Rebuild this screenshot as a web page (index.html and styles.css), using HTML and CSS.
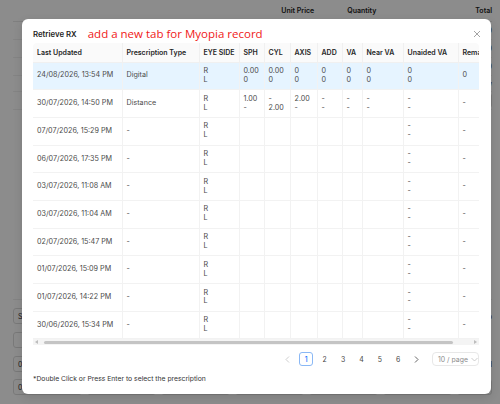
FILE: index.html
```html
<!DOCTYPE html>
<html lang="en">
<head>
    <meta charset="UTF-8">
    <meta name="viewport" content="width=device-width, initial-scale=1.0">
    <title>Retrieve RX</title>
    <link rel="stylesheet" href="styles.css">
</head>
<body>
    <!-- Order page behind the dialog -->
    <div class="page">
        <div class="items-head">
            <span class="col-name"></span>
            <span class="col-price">Unit Price</span>
            <span class="col-qty">Quantity</span>
            <span class="col-total">Total</span>
        </div>
        <div class="items-row"><span class="col-total">0</span></div>
        <div class="items-row"><span class="col-total">0</span></div>
        <div class="items-row"><span class="col-total">0</span></div>
        <div class="items-row note"><span class="col-total">New</span></div>
        <div class="items-row"><span class="chip">Dis</span></div>
        <div class="spacer"></div>
        <div class="field-line"><span class="field small">S</span><span class="side-text">Distrib</span></div>
        <div class="field-line"><span class="field small"></span></div>
        <div class="field-line"><span class="field small">0</span><span class="side-text">Saved</span></div>
        <div class="field-grid">
            <span class="field">0.00</span>
            <span class="field">0.00</span>
            <span class="field">0.00</span>
            <span class="field">0.00</span>
            <span class="field">0.00</span>
            <span class="field">0.00</span>
            <span class="field">0.00</span>
        </div>
    </div>

    <div class="mask"></div>

    <div class="modal">
        <div class="modal-head">
            <span class="modal-title">Retrieve RX</span>
            <span class="todo-note">add a new tab for Myopia record</span>
            <button class="close-btn" type="button" aria-label="Close">
                <svg width="8" height="8" viewBox="0 0 8 8"><path d="M1 1L7 7M7 1L1 7" stroke="#9a9a9a" stroke-width="0.9" fill="none"/></svg>
            </button>
        </div>

        <div class="rx-scroll">
            <table class="rx-table">
                <colgroup>
                    <col style="width:89px"><col style="width:77px"><col style="width:40px">
                    <col style="width:25px"><col style="width:26px"><col style="width:27px">
                    <col style="width:25px"><col style="width:20px"><col style="width:41px">
                    <col style="width:55px"><col style="width:71px">
                </colgroup>
                <thead>
                    <tr>
                        <th>Last Updated</th><th>Prescription Type</th><th>EYE SIDE</th>
                        <th>SPH</th><th>CYL</th><th>AXIS</th><th>ADD</th><th>VA</th>
                        <th>Near VA</th><th>Unaided VA</th><th>Remarks</th>
                    </tr>
                </thead>
                <tbody id="rxBody">
                    <tr class="selected">
                        <td>24/08/2026, 13:54 PM</td><td>Digital</td><td>R<br>L</td>
                        <td>0.00<br>0</td><td>0.00<br>0</td><td>0<br>0</td><td>0<br>0</td>
                        <td>0<br>0</td><td>0<br>0</td><td>0<br>0</td><td>0</td>
                    </tr>
                    <tr>
                        <td>30/07/2026, 14:50 PM</td><td>Distance</td><td>R<br>L</td>
                        <td>1.00<br>-</td><td>-<br>2.00</td><td>2.00<br>-</td><td>-<br>-</td>
                        <td>-<br>-</td><td>-<br>-</td><td>-<br>-</td><td>-</td>
                    </tr>
                    <tr><td>07/07/2026, 15:29 PM</td><td>-</td><td>R<br>L</td><td></td><td></td><td></td><td></td><td></td><td></td><td>-<br>-</td><td>-</td></tr>
                    <tr><td>06/07/2026, 17:35 PM</td><td>-</td><td>R<br>L</td><td></td><td></td><td></td><td></td><td></td><td></td><td>-<br>-</td><td>-</td></tr>
                    <tr><td>03/07/2026, 11:08 AM</td><td>-</td><td>R<br>L</td><td></td><td></td><td></td><td></td><td></td><td></td><td>-<br>-</td><td>-</td></tr>
                    <tr><td>03/07/2026, 11:04 AM</td><td>-</td><td>R<br>L</td><td></td><td></td><td></td><td></td><td></td><td></td><td>-<br>-</td><td>-</td></tr>
                    <tr><td>02/07/2026, 15:47 PM</td><td>-</td><td>R<br>L</td><td></td><td></td><td></td><td></td><td></td><td></td><td>-<br>-</td><td>-</td></tr>
                    <tr><td>01/07/2026, 15:09 PM</td><td>-</td><td>R<br>L</td><td></td><td></td><td></td><td></td><td></td><td></td><td>-<br>-</td><td>-</td></tr>
                    <tr><td>01/07/2026, 14:22 PM</td><td>-</td><td>R<br>L</td><td></td><td></td><td></td><td></td><td></td><td></td><td>-<br>-</td><td>-</td></tr>
                    <tr><td>30/06/2026, 15:34 PM</td><td>-</td><td>R<br>L</td><td></td><td></td><td></td><td></td><td></td><td></td><td>-<br>-</td><td>-</td></tr>
                </tbody>
            </table>
        </div>
        <!-- horizontal scroll bar of the table -->
        <div class="hscroll">
            <span class="arrow-left"></span>
            <div class="thumb"></div>
            <span class="arrow-right"></span>
        </div>

        <div class="pager">
            <span class="page-item disabled">
                <svg width="5" height="7" viewBox="0 0 5 7"><path d="M4 0.5L1 3.5L4 6.5" stroke="#c8c8c8" stroke-width="0.9" fill="none"/></svg>
            </span>
            <span class="page-item active">1</span>
            <span class="page-item">2</span>
            <span class="page-item">3</span>
            <span class="page-item">4</span>
            <span class="page-item">5</span>
            <span class="page-item">6</span>
            <span class="page-item">
                <svg width="5" height="7" viewBox="0 0 5 7"><path d="M1 0.5L4 3.5L1 6.5" stroke="#555" stroke-width="0.9" fill="none"/></svg>
            </span>
            <span class="page-size">10 / page
                <svg width="7" height="5" viewBox="0 0 7 5"><path d="M0.5 1L3.5 4L6.5 1" stroke="#c0c0c0" stroke-width="0.8" fill="none"/></svg>
            </span>
        </div>

        <p class="hint">*Double Click or Press Enter to select the prescription</p>
    </div>
</body>
</html>
```

FILE: styles.css
```css
* { box-sizing: border-box; }
body { margin: 0; width: 500px; height: 404px; overflow: hidden; font-family: Inter, "Open Sans", sans-serif; color: #333; background: #fff; position: relative; }

/* page behind */
.page { padding: 0 8px 0 13px; font-size: 7px; overflow: hidden; height: 404px; }
.items-head { display: flex; height: 22px; align-items: center; font-weight: 600; color: #222; border-bottom: 1px solid #e8e8e8; }
.col-name { flex: 1; }
.col-price { width: 66px; }
.col-qty { width: 128px; }
.col-total { margin-left: auto; text-align: right; }
.items-row { display: flex; height: 18px; align-items: center; border-bottom: 1px solid #f0f0f0; }
.items-row.note { height: 16px; justify-content: flex-end; }
.chip { margin-left: auto; padding: 2px 6px; border: 1px solid #ddd; background: #f5f5f5; border-radius: 3px; }
.spacer { height: 190px; border-bottom: 1px solid #eee; }
.field-line { display: flex; align-items: center; justify-content: space-between; margin-top: 8px; }
.field { display: inline-flex; align-items: center; height: 16px; padding: 0 4px; border: 1px solid #ddd; border-radius: 3px; background: #fff; }
.field.small { width: 60px; }
.side-text { color: #444; }
.field-grid { display: grid; grid-template-columns: repeat(6, 69px) 1fr; gap: 5px; margin-top: 7px; }

.mask { position: absolute; inset: 0; background: rgba(0, 0, 0, 0.45); }

/* dialog */
.modal { position: absolute; left: 22px; top: 19px; width: 469px; height: 375px; background: #fff; border-radius: 6px; padding: 5px 12px 0 11px; box-shadow: 0 3px 10px rgba(0, 0, 0, 0.12); }
.modal-head { display: flex; align-items: center; height: 19px; }
.modal-title { font-size: 7.8px; font-weight: 600; color: #1f1f1f; }
.todo-note { margin-left: 11px; font-family: "Open Sans", sans-serif; font-size: 11.5px; color: #f01818; line-height: 1; }
.close-btn { margin-left: auto; margin-right: -3px; width: 10px; height: 10px; padding: 0; border: none; background: none; display: flex; align-items: center; justify-content: center; }

.rx-scroll { overflow: hidden; border-radius: 4px 4px 0 0; }
.rx-table { border-collapse: collapse; table-layout: fixed; width: 496px; font-size: 7.2px; }
.rx-table th { height: 19px; padding: 0 4px; text-align: left; font-weight: 600; font-size: 7px; color: #262626; background: #fafafa; border-right: 1px solid #f0f0f0; border-bottom: 1px solid #f0f0f0; white-space: nowrap; overflow: hidden; }
.rx-table td { height: 27.7px; padding: 0 4px; line-height: 8.8px; color: #4a4a4a; border-right: 1px solid #f2f2f2; border-bottom: 1px solid #f2f2f2; vertical-align: middle; white-space: nowrap; overflow: hidden; }
.rx-table tr.selected td { background: #e6f4ff; }

.hscroll { display: flex; align-items: center; height: 6px; background: #f4f4f4; padding: 0 2px; }
.thumb { height: 3px; width: 409px; margin-left: 6px; background: #c4c4c4; border-radius: 2px; }
.arrow-left { width: 0; height: 0; border-top: 2px solid transparent; border-bottom: 2px solid transparent; border-right: 3px solid #bdbdbd; }
.arrow-right { margin-left: auto; width: 0; height: 0; border-top: 2px solid transparent; border-bottom: 2px solid transparent; border-left: 3px solid #bdbdbd; }

.pager { display: flex; align-items: center; justify-content: flex-end; gap: 4.4px; margin-top: 7px; height: 14px; font-size: 6.9px; color: #444; }
.page-item { width: 14px; height: 14px; display: flex; align-items: center; justify-content: center; border-radius: 3px; }
.page-item.active { border: 1px solid #8ab8f5; color: #1677ff; font-weight: 500; }
.page-size { margin-left: 4px; width: 47px; height: 14px; display: flex; align-items: center; gap: 3px; padding-left: 5px; border: 1px solid #e8e8e8; border-radius: 4px; color: #8c8c8c; }

.hint { margin: 8px 0 0; font-size: 6.8px; line-height: 10px; color: #333; }
```
